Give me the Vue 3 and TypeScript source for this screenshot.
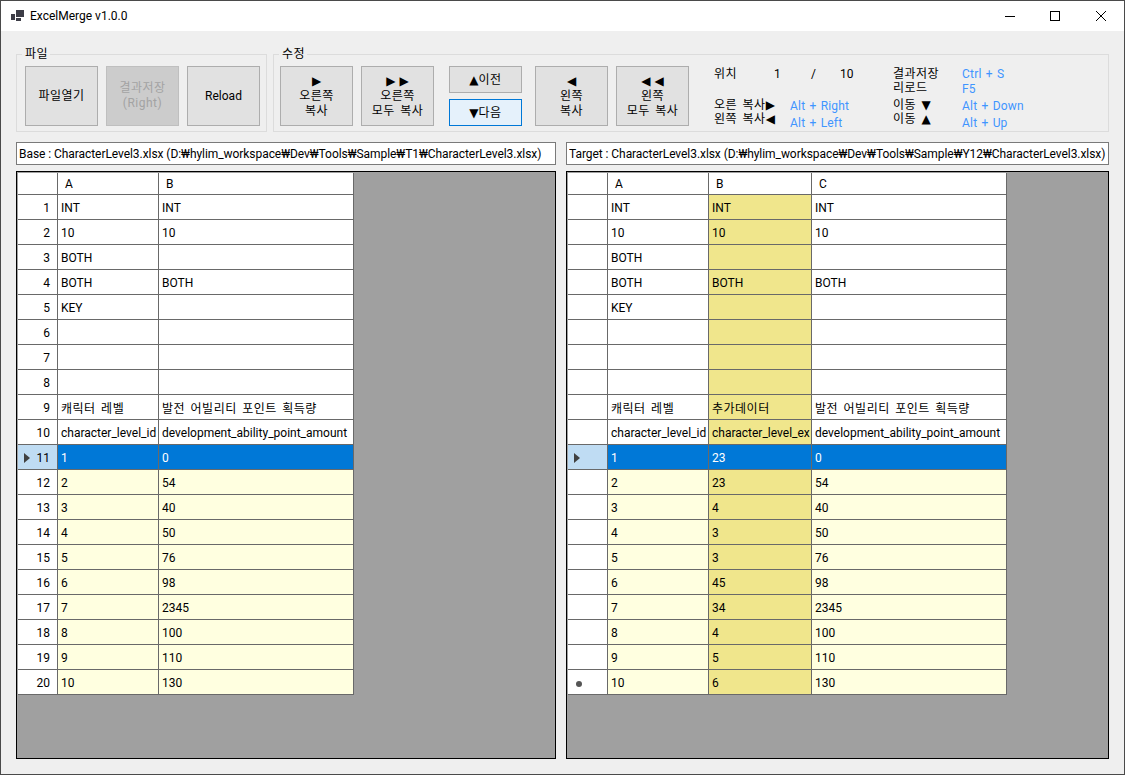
<script setup lang="ts">
interface Pane {
  path: string
  columns: string[]
  widths: number[]
  numbered: boolean
  diffColumn: number
  hasNewRowMark: boolean
  rows: string[][]
}

const titleRows = [
  ['INT', 'INT'],
  ['10', '10'],
  ['BOTH', ''],
  ['BOTH', 'BOTH'],
  ['KEY', ''],
  ['', ''],
  ['', ''],
  ['', ''],
  ['캐릭터 레벨', '발전 어빌리티 포인트 획득량'],
  ['character_level_id', 'development_ability_point_amount'],
  ['1', '0'],
  ['2', '54'],
  ['3', '40'],
  ['4', '50'],
  ['5', '76'],
  ['6', '98'],
  ['7', '2345'],
  ['8', '100'],
  ['9', '110'],
  ['10', '130'],
]

// values of the column that only exists in the target file
const addedColumn = [
  'INT', '10', '', 'BOTH', '', '', '', '',
  '추가데이터', 'character_level_ex',
  '23', '23', '4', '3', '3', '45', '34', '4', '5', '6',
]

const panes: Pane[] = [
  {
    path: 'Base : CharacterLevel3.xlsx (D:₩hylim_workspace₩Dev₩Tools₩Sample₩T1₩CharacterLevel3.xlsx)',
    columns: ['A', 'B'],
    widths: [40, 101, 195],
    numbered: true,
    diffColumn: -1,
    hasNewRowMark: false,
    rows: titleRows,
  },
  {
    path: 'Target : CharacterLevel3.xlsx (D:₩hylim_workspace₩Dev₩Tools₩Sample₩Y12₩CharacterLevel3.xlsx)',
    columns: ['A', 'B', 'C'],
    widths: [40, 101, 103, 195],
    numbered: false,
    diffColumn: 1,
    hasNewRowMark: true,
    rows: titleRows.map((r, i) => [r[0], addedColumn[i], r[1]]),
  },
]

const SELECTED_ROW = 10
const FIRST_DATA_ROW = 10

function tableWidth(pane: Pane) {
  return pane.widths.reduce((a, b) => a + b, 0)
}

function cellClass(pane: Pane, rowIndex: number, colIndex: number, text: string) {
  const classes: string[] = []
  if (/[가-힣]/.test(text)) classes.push('ko')
  if (rowIndex === SELECTED_ROW) classes.push('selected')
  else if (colIndex === pane.diffColumn) classes.push('diff')
  else if (rowIndex >= FIRST_DATA_ROW) classes.push('data')
  return classes
}
</script>

<template>
  <div class="window">
    <header class="titlebar">
      <svg class="app-icon" width="13" height="12" viewBox="0 0 13 12">
        <rect x="0" y="4" width="4" height="6" fill="#3c3c46" />
        <rect x="5" y="0" width="8" height="7" fill="#3c3c46" />
        <rect x="5" y="8" width="5" height="3" fill="#3c3c46" />
      </svg>
      <span class="title">ExcelMerge v1.0.0</span>
      <div class="controls">
        <button class="ctl">
          <svg width="10" height="10" viewBox="0 0 10 10"><path d="M0 5.5H10" stroke="#000" fill="none" /></svg>
        </button>
        <button class="ctl">
          <svg width="10" height="10" viewBox="0 0 10 10"><rect x="0.5" y="0.5" width="9" height="9" stroke="#000" fill="none" /></svg>
        </button>
        <button class="ctl">
          <svg width="10" height="10" viewBox="0 0 10 10"><path d="M0 0L10 10M10 0L0 10" stroke="#000" stroke-width="1" fill="none" /></svg>
        </button>
      </div>
    </header>

    <main class="content">
      <section class="toolbar">
        <div class="group file-group">
          <span class="legend ko">파일</span>
          <button class="btn ko">파일열기</button>
          <button class="btn ko" disabled>결과저장<br />(Right)</button>
          <button class="btn">Reload</button>
        </div>

        <div class="group edit-group">
          <span class="legend ko">수정</span>
          <button class="btn ko"><span class="tri">▶</span><br />오른쪽<br />복사</button>
          <button class="btn ko"><span class="tri">▶ ▶</span><br />오른쪽<br />모두 복사</button>
          <div class="nav">
            <button class="btn small ko"><span class="tri">▲</span>이전</button>
            <button class="btn small focused ko"><span class="tri">▼</span>다음</button>
          </div>
          <button class="btn ko"><span class="tri">◀</span><br />왼쪽<br />복사</button>
          <button class="btn ko"><span class="tri">◀ ◀</span><br />왼쪽<br />모두 복사</button>

          <div class="info">
            <div class="position">
              <span class="pos-label ko">위치</span>
              <span class="pos-current">1</span>
              <span class="pos-sep">/</span>
              <span>10</span>
            </div>
            <span class="ko">결과저장</span>
            <span class="shortcut">Ctrl + S</span>

            <span></span>
            <span></span>
            <span class="ko">리로드</span>
            <span class="shortcut low-f5">F5</span>

            <span class="ko">오른 복사<span class="tri">▶</span></span>
            <span class="shortcut low-f5">Alt + Right</span>
            <span class="ko">이동 <span class="tri">▼</span></span>
            <span class="shortcut low-f5">Alt + Down</span>

            <span class="ko">왼쪽 복사<span class="tri">◀</span></span>
            <span class="shortcut low">Alt + Left</span>
            <span class="ko">이동 <span class="tri">▲</span></span>
            <span class="shortcut low">Alt + Up</span>
          </div>
        </div>
      </section>

      <section class="panes">
        <div v-for="pane in panes" :key="pane.path" class="pane">
          <input class="path" type="text" readonly :value="pane.path" />
          <div class="grid">
            <table :style="{ width: tableWidth(pane) + 'px' }">
              <colgroup>
                <col v-for="(w, i) in pane.widths" :key="i" :style="{ width: w + 'px' }" />
              </colgroup>
              <thead>
                <tr>
                  <th class="row-head"></th>
                  <th v-for="c in pane.columns" :key="c">{{ c }}</th>
                </tr>
              </thead>
              <tbody>
                <tr v-for="(row, r) in pane.rows" :key="r">
                  <td class="row-head" :class="{ current: r === SELECTED_ROW }">
                    <span v-if="r === SELECTED_ROW" class="marker"></span>
                    <span v-if="pane.hasNewRowMark && r === pane.rows.length - 1" class="new-mark"></span>
                    <template v-if="pane.numbered">{{ r + 1 }}</template>
                  </td>
                  <td v-for="(cell, c) in row" :key="c" :class="cellClass(pane, r, c, cell)">{{ cell }}</td>
                </tr>
              </tbody>
            </table>
          </div>
        </div>
      </section>
    </main>
  </div>
</template>

<style>
html,
body {
  margin: 0;
  background: #f0f0f0;
}
</style>

<style scoped>
.window {
  box-sizing: border-box;
  width: 1125px;
  height: 775px;
  display: flex;
  flex-direction: column;
  border: 1px solid #4a4a4a;
  background: #efefef;
  font-family: Roboto, "Noto Sans CJK KR", sans-serif;
  font-size: 12px;
  color: #000;
  overflow: hidden;
}

/* Korean glyphs run a little wider in the original */
.ko {
  letter-spacing: 0.5px;
  word-spacing: 2px;
}

/* Title bar */
.titlebar {
  height: 30px;
  flex: none;
  display: flex;
  align-items: center;
  background: #fff;
  padding-left: 10px;
}

.app-icon {
  margin-top: -1px;
}

.title {
  margin-left: 6px;
  margin-top: -1px;
}

.controls {
  margin-left: auto;
  display: flex;
  height: 30px;
}

.ctl {
  width: 46px;
  height: 30px;
  padding: 0;
  border: none;
  background: none;
  display: flex;
  align-items: center;
  justify-content: center;
}

.ctl:nth-child(2) {
  width: 45px;
  padding-right: 1px;
}

/* Main content */
.content {
  flex: 1;
  display: flex;
  flex-direction: column;
  padding: 23px 15px 15px;
  min-height: 0;
}

.toolbar {
  display: flex;
  gap: 6px;
  height: 78px;
  flex: none;
}

.group {
  position: relative;
  box-sizing: border-box;
  height: 78px;
  border: 1px solid #dcdcdc;
  display: flex;
  padding: 11px 0 0 8px;
}

.file-group {
  width: 251px;
  gap: 8px;
}

.edit-group {
  flex: 1;
  padding-left: 6px;
}

.legend {
  position: absolute;
  top: -9px;
  left: 5px;
  padding: 0 2px 0 3px;
  background: #efefef;
  line-height: 16px;
}

.btn {
  box-sizing: border-box;
  width: 73px;
  height: 60px;
  padding: 0;
  border: 1px solid #adadad;
  background: #e1e1e1;
  font: inherit;
  line-height: 15px;
  color: #000;
}

.btn:disabled {
  background: #cccccc;
  border-color: #bfbfbf;
  color: #a3a3a3;
}

.edit-group > .btn + .btn {
  margin-left: 8px;
}

.small {
  height: 27px;
  padding-top: 2px;
}

.focused {
  background: #e5f1fb;
  border-color: #0078d7;
}

.nav {
  display: flex;
  flex-direction: column;
  gap: 6px;
  margin: 0 13px 0 15px;
}

.tri {
  font-family: "DejaVu Sans", sans-serif;
  font-size: 12px;
  letter-spacing: 0;
  word-spacing: 0;
  line-height: 12px;
}

/* Position and shortcut legend */
.info {
  margin-left: 25px;
  padding-top: 1px;
  display: grid;
  grid-template-columns: 76px 103px 69px auto;
  grid-template-rows: 14px 17px 14px 18px;
  align-content: start;
  line-height: 14px;
}

.position {
  grid-column: 1 / 3;
  display: flex;
}

.pos-label {
  width: 60px;
}

.pos-current {
  width: 37px;
}

.pos-sep {
  width: 29px;
}

.shortcut {
  color: #3f95ff;
  letter-spacing: 0.2px;
  word-spacing: 1px;
}

.low-f5 {
  padding-top: 1px;
}

.low {
  padding-top: 4px;
}

/* Two data panes */
.panes {
  flex: 1;
  display: grid;
  grid-template-columns: 540px 543px;
  column-gap: 10px;
  margin-top: 10px;
  min-height: 0;
}

.pane {
  display: flex;
  flex-direction: column;
  gap: 6px;
  min-height: 0;
}

.path {
  box-sizing: border-box;
  width: 100%;
  height: 23px;
  flex: none;
  padding: 0 2px;
  border: 1px solid #7a7a7a;
  background: #fff;
  font: inherit;
  letter-spacing: -0.06px;
  color: #000;
  outline: none;
}

.grid {
  flex: 1;
  border: 1px solid #000;
  background: #a0a0a0;
  padding: 1px;
  min-height: 0;
}

table {
  table-layout: fixed;
  border-collapse: separate;
  border-spacing: 0;
}

th,
td {
  box-sizing: border-box;
  height: 25px;
  padding: 2px 0 0 3px;
  border-right: 1px solid #696969;
  border-bottom: 1px solid #696969;
  background: #fff;
  font-weight: normal;
  text-align: left;
  white-space: nowrap;
  overflow: hidden;
}

td.ko {
  padding-top: 0;
}

th {
  height: 22px;
  padding: 0 0 0 7px;
}

td.row-head,
th.row-head {
  position: relative;
  padding: 2px 7px 0 0;
  text-align: right;
}

.row-head.current {
  background: #bfdcf3;
}

.marker {
  position: absolute;
  left: 6px;
  top: 8px;
  width: 6px;
  height: 10px;
  background: #404040;
  clip-path: polygon(0 0, 100% 50%, 0 100%);
}

.new-mark {
  position: absolute;
  left: 8px;
  top: 11px;
  width: 6px;
  height: 6px;
  border-radius: 50%;
  background: #555;
}

td.data {
  background: #ffffe0;
}

td.diff {
  background: #f0e68c;
}

td.selected {
  background: #0078d7;
  color: #fff;
}
</style>
